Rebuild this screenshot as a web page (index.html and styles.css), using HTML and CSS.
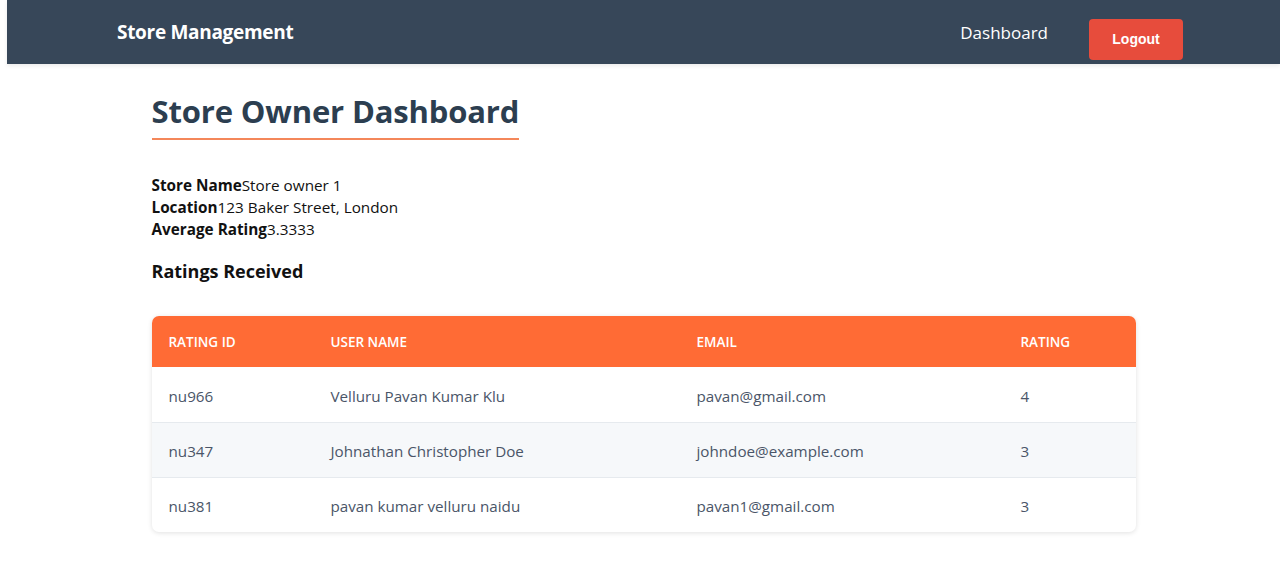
FILE: index.html
```html
<!DOCTYPE html>
<html>
<head>
<meta charset="utf-8">
<link rel="stylesheet" href="styles.css">
</head>
<body>
<div class="frame">
  <header class="topbar">
    <div class="brand">Store Management</div>
    <nav class="nav">
      <a class="nav-link" href="#">Dashboard</a>
      <button class="logout">Logout</button>
    </nav>
  </header>
  <main class="container">
    <h1 class="title">Store Owner Dashboard</h1>
    <div class="info">
      <div><b>Store Name</b>Store owner 1</div>
      <div><b>Location</b>123 Baker Street, London</div>
      <div><b>Average Rating</b>3.3333</div>
    </div>
    <h2 class="subtitle">Ratings Received</h2>
    <div class="table-card">
      <table class="ratings">
        <colgroup>
          <col class="c1"><col class="c2"><col class="c3"><col class="c4">
        </colgroup>
        <thead>
          <tr><th>Rating ID</th><th>User Name</th><th>Email</th><th>Rating</th></tr>
        </thead>
        <tbody>
          <tr><td>nu966</td><td>Velluru Pavan Kumar Klu</td><td>pavan@gmail.com</td><td>4</td></tr>
          <tr><td>nu347</td><td>Johnathan Christopher Doe</td><td>johndoe@example.com</td><td>3</td></tr>
          <tr><td>nu381</td><td>pavan kumar velluru naidu</td><td>pavan1@gmail.com</td><td>3</td></tr>
        </tbody>
      </table>
    </div>
  </main>
</div>
</body>
</html>
```
FILE: styles.css
```css
* { box-sizing: border-box; }
html, body { margin: 0; padding: 0; background: #fff; }
body {
  font-family: "Open Sans", "Noto Sans", sans-serif;
  color: #111;
}
.frame {
  margin-left: 7px;
  min-height: 570px;
  background: #fff;
}
.topbar {
  height: 64px;
  background: #374759;
  display: flex;
  align-items: center;
  justify-content: space-between;
  padding: 0 97px 0 110px;
  box-shadow: 0 2px 4px rgba(0,0,0,0.08);
}
.brand {
  color: #fff;
  font-weight: 700;
  font-size: 19px;
  letter-spacing: -0.3px;
  margin-top: -1px;
}
.nav { display: flex; align-items: center; }
.nav-link {
  color: #fff;
  text-decoration: none;
  font-size: 17px;
  margin-right: 41px;
  margin-top: 0;
}
.logout {
  background: #e74c3c;
  color: #fff;
  border: none;
  border-radius: 4px;
  width: 94px;
  height: 41px;
  font-family: "Liberation Sans", Arial, sans-serif;
  font-weight: 700;
  font-size: 14px;
  margin-top: 14px;
}
.container {
  width: 984px;
  margin: 0 auto;
  padding-top: 26px;
}
.title {
  display: inline-block;
  margin: 0;
  font-size: 31px;
  font-weight: 700;
  color: #2c3e50;
  letter-spacing: -0.15px;
  line-height: 42px;
  padding-bottom: 6px;
  border-bottom: 2px solid #f4875a;
}
.info {
  margin-top: 34px;
  font-size: 15.3px;
  line-height: 22px;
  color: #111;
}
.info b { font-weight: 700; }
.subtitle {
  margin: 18px 0 0;
  font-size: 18px;
  font-weight: 700;
  line-height: 26px;
  color: #111;
}
.table-card {
  margin-top: 32px;
  border-radius: 7px;
  overflow: hidden;
  box-shadow: 0 1px 5px rgba(0,0,0,0.12);
}
.ratings {
  width: 100%;
  border-collapse: collapse;
}
.c1 { width: 162px; }
.c2 { width: 366px; }
.c3 { width: 324px; }
.c4 { width: 132px; }
.ratings th {
  background: #ff6b35;
  color: #fff;
  text-align: left;
  text-transform: uppercase;
  font-size: 13.5px;
  font-weight: 600;
  height: 51px;
  padding: 1px 17px 0;
}
.ratings td {
  height: 55px;
  padding: 3px 17px 0;
  font-size: 15.2px;
  color: #4a5568;
  border-top: 1px solid #e6eaee;
}
.ratings tbody tr:first-child td { border-top: none; }
.ratings tbody tr:nth-child(2) td { background: #f6f8fa; }
```
